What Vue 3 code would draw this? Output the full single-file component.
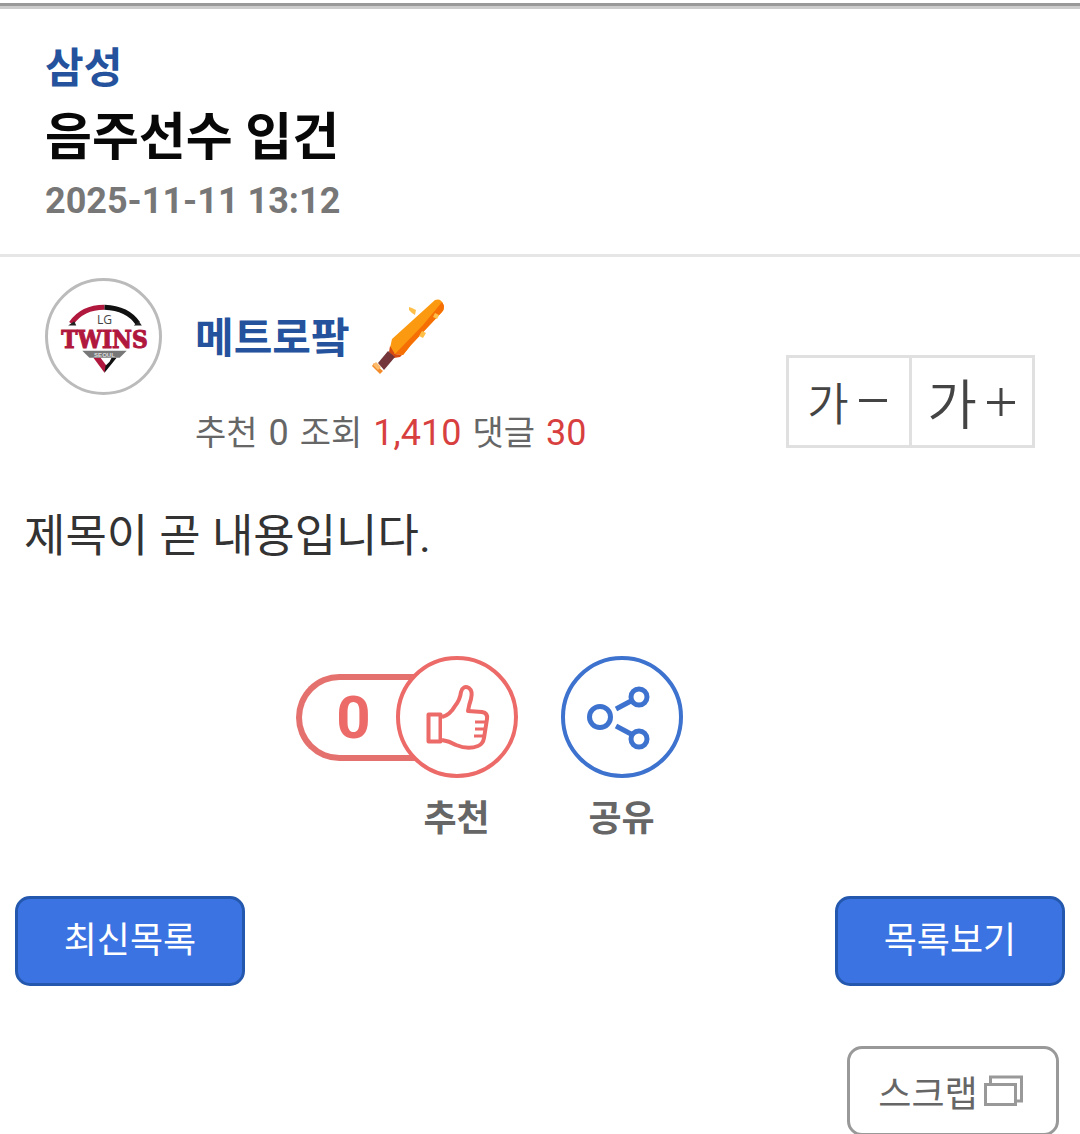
<template>
  <main class="post">
    <header class="post-header">
      <a class="category" href="#">{{ post.category }}</a>
      <h1 class="title">{{ post.title }}</h1>
      <time class="date" datetime="2025-11-11T13:12">{{ post.date }}</time>
    </header>

    <section class="profile">
      <div class="avatar">
        <svg viewBox="0 0 110 110" role="img" aria-label="LG TWINS SEOUL">
          <path d="M23 42 Q34 26 56 26" fill="none" stroke="#b0183d" stroke-width="5" />
          <path d="M56 26 Q79 27 89 42" fill="none" stroke="#111" stroke-width="5" />
          <path d="M20 44l6-4 2 4zM85 44l5-4 3 4z" fill="#222" />
          <text class="logo-lg" x="56" y="43" text-anchor="middle">LG</text>
          <text class="logo-name" x="56" y="66" text-anchor="middle">TWINS</text>
          <path d="M45 76h7l6 8-2 7z" fill="#b0183d" />
          <path d="M56 91l1-7 4-4 2-4h5z" fill="#111" />
          <path d="M34 69h44l-7 7H41z" fill="#777" />
          <text class="logo-city" x="56" y="75" text-anchor="middle">SEOUL</text>
        </svg>
      </div>

      <div class="info">
        <div class="nick-row">
          <a class="nick" href="#">{{ post.author }}</a>
          <svg class="bat" viewBox="0 0 80 80" aria-hidden="true">
            <path d="M64 3q6-2 8 4 2 5-1 8L40 48l-8 10-8-1-5-6 2-9z" fill="#fb9a10" />
            <path d="M71 5q4 5 0 10L40 48l-8 10-8-1 28-29z" fill="#f56f05" />
            <path d="M19 49l5 8 7 1-2 2-6 1-5-6z" fill="#d94a10" />
            <path d="M17 54l7 6-11 13-6-7z" fill="#74363a" />
            <path d="M3 66l9 8-3 3-8-8z" fill="#f48b2a" />
            <path d="M5 65l5 5-3 3-5-5z" fill="#fdbb6c" />
            <path d="M38 10l3 1 4 2-1 5-3-2-3-3zM51 34l4 2-3 5-4-2zM64 16l4 2-2 4-4-2z" fill="#ffc04a" />
          </svg>
        </div>
        <dl class="stats">
          <div>
            <dt>추천</dt>
            <dd>{{ votes }}</dd>
          </div>
          <div>
            <dt>조회</dt>
            <dd class="point">{{ post.views }}</dd>
          </div>
          <div>
            <dt>댓글</dt>
            <dd class="point">{{ post.comments }}</dd>
          </div>
        </dl>
      </div>

      <div class="font-size">
        <button type="button" aria-label="글자 작게" @click="changeSize(-3)">
          <span class="small">가</span>
          <svg viewBox="0 0 28 28" aria-hidden="true"><path d="M0 12.5h28" /></svg>
        </button>
        <button type="button" aria-label="글자 크게" @click="changeSize(3)">
          <span class="large">가</span>
          <svg viewBox="0 0 28 28" aria-hidden="true"><path d="M0 14.5h28M14 0v28" /></svg>
        </button>
      </div>
    </section>

    <article class="content" :style="{ fontSize: textSize + 'px' }">
      {{ post.body }}
    </article>

    <div class="actions">
      <button class="vote" type="button" @click="votes++">
        <span class="count">{{ votes }}</span>
        <svg class="circle" viewBox="0 0 122 122" aria-hidden="true">
          <circle cx="61" cy="61" r="59" />
          <path d="M32.500 58.500h12v27h-12z" />
          <path d="M46 61q8-2 13-11 5-6 6-14 2-7 8-4 4 3 2 11-2 6-3 12l14 1q6 1 5 7l-3 19q-1 6-6 8-10 4-22-1-7-4-14-5" />
          <path class="finger" d="M79 66h10M79 73h9M78 80h9" />
        </svg>
        <span class="label">추천</span>
      </button>

      <button class="share" type="button">
        <svg class="circle" viewBox="0 0 122 122" aria-hidden="true">
          <circle cx="61" cy="61" r="59" />
          <g class="nodes">
            <circle cx="39" cy="61" r="10.500" />
            <circle cx="78" cy="41" r="8" />
            <circle cx="78" cy="83" r="8" />
            <path d="M55 53l15-8M55 70l15 8" />
          </g>
        </svg>
        <span class="label">공유</span>
      </button>
    </div>

    <nav class="lists">
      <a class="list-button" href="#">최신목록</a>
      <a class="list-button" href="#">목록보기</a>
    </nav>

    <div class="tools">
      <button class="scrap" type="button">
        스크랩
        <svg viewBox="0 0 40 32" aria-hidden="true">
          <path d="M6.500 8V2h31v24h-5" />
          <path d="M1.500 9.500h30v20h-30z" />
        </svg>
      </button>
    </div>
  </main>
</template>

<script setup>
import { ref } from 'vue'

const post = {
  category: '삼성',
  title: '음주선수 입건',
  date: '2025-11-11 13:12',
  author: '메트로팤',
  views: '1,410',
  comments: 30,
  body: '제목이 곧 내용입니다.'
}

const votes = ref(0)
const textSize = ref(45)

function changeSize(step) {
  textSize.value = Math.min(60, Math.max(30, textSize.value + step))
}
</script>

<style>
body {
  margin: 0;
  background: #fff;
}
</style>

<style scoped>
.post {
  box-sizing: border-box;
  height: 100vh;
  overflow: hidden;
  padding-top: 3px;
  font-family: Roboto, "Noto Sans CJK KR", sans-serif;
  color: #333;
}

.post * {
  box-sizing: border-box;
}

a {
  text-decoration: none;
}

button {
  margin: 0;
  padding: 0;
  border: none;
  background: none;
  font-family: inherit;
  color: inherit;
  cursor: pointer;
}

svg {
  display: block;
  flex: none;
}

.post-header {
  display: flex;
  flex-direction: column;
  align-items: flex-start;
  padding: 30px 45px 26px;
  border-top: 3px solid #999;
  border-bottom: 3px solid #e6e6e6;
  box-shadow: inset 0 3px #ccc;
}

.category {
  font-size: 42px;
  font-weight: 700;
  line-height: 66px;
  color: #24529d;
}

.title {
  margin: 0;
  font-size: 51px;
  font-weight: 700;
  line-height: 72px;
  color: #080808;
}

.date {
  font-size: 36px;
  font-weight: 700;
  line-height: 54px;
  color: #777;
}

.profile {
  display: flex;
  align-items: flex-start;
  padding: 21px 45px 0;
}

.avatar {
  flex: none;
  width: 117px;
  height: 117px;
  margin-right: 33px;
  border: 3px solid #bbb;
  border-radius: 50%;
}

.logo-lg {
  font: 400 12px "Open Sans", sans-serif;
  fill: #444;
}

.logo-name {
  font: 700 24px "DejaVu Serif Condensed", "DejaVu Serif", serif;
  fill: #b0183d;
  stroke: #b0183d;
  stroke-width: 1px;
}

.logo-city {
  font: 700 6px "Liberation Sans", sans-serif;
  fill: #ddd;
}

.nick-row {
  display: flex;
  align-items: center;
  gap: 21px;
  height: 117px;
}

.nick {
  padding-top: 4px;
  font-size: 42px;
  font-weight: 700;
  line-height: 60px;
  color: #24529d;
}

.bat {
  width: 80px;
  height: 80px;
}

.stats {
  display: flex;
  gap: 11px;
  margin: 8px 0 0;
  line-height: 60px;
  color: #666;
}

.stats div {
  display: flex;
  align-items: baseline;
  gap: 11px;
}

.stats dt {
  font-size: 34px;
}

.stats dd {
  margin: 0;
  font-size: 36px;
}

.stats .point {
  color: #d83f3f;
}

.font-size {
  display: flex;
  margin: 77px 0 0 auto;
  border: 3px solid #e0e0e0;
}

.font-size button {
  display: flex;
  align-items: center;
  justify-content: center;
  gap: 10px;
  width: 120px;
  height: 87px;
  padding-right: 4px;
  color: #444;
}

.font-size button + button {
  width: 123px;
  padding-right: 2px;
  border-left: 3px solid #e0e0e0;
}

.font-size span {
  font-family: "Noto Sans CJK KR", sans-serif;
  font-weight: 350;
  line-height: 72px;
}

.font-size .small {
  font-size: 45px;
}

.font-size .large {
  font-size: 54px;
}

.font-size svg {
  width: 28px;
  height: 28px;
  fill: none;
  stroke: #444;
  stroke-width: 3;
}

.content {
  padding: 38px 24px 0;
  line-height: 72px;
}

.actions {
  display: flex;
  justify-content: center;
  gap: 43px;
  padding: 83px 102px 0 0;
}

.vote {
  display: grid;
  grid-template-columns: 100px 122px;
  align-items: center;
}

.count {
  width: 122px;
  height: 87px;
  padding-right: 12px;
  border: 6px solid #e5716e;
  border-right: none;
  border-radius: 44px 0 0 44px;
  font-size: 60px;
  font-weight: 700;
  line-height: 75px;
  color: #ec6b69;
}

.circle {
  position: relative;
  width: 122px;
  height: 122px;
  fill: #fff;
  stroke: #ec6b69;
  stroke-width: 4;
  stroke-linejoin: round;
}

.finger {
  stroke-width: 3;
}

.share .circle {
  stroke: #3d72cf;
}

.share .nodes {
  stroke-width: 5;
}

.label {
  display: block;
  grid-column: 2;
  padding-top: 17px;
  font-size: 36px;
  font-weight: 700;
  line-height: 48px;
  color: #666;
}

.lists {
  display: flex;
  justify-content: space-between;
  padding: 53px 15px 0;
}

.list-button {
  width: 230px;
  height: 90px;
  border: 3px solid #2458ae;
  border-radius: 15px;
  background: #3b74e2;
  font-size: 36px;
  line-height: 84px;
  text-align: center;
  color: #fff;
}

.tools {
  display: flex;
  justify-content: flex-end;
  padding: 60px 21px 0;
}

.scrap {
  display: flex;
  align-items: center;
  justify-content: center;
  gap: 6px;
  flex: none;
  width: 212px;
  height: 90px;
  padding-right: 4px;
  border: 3px solid #999;
  border-radius: 15px;
  font-size: 36px;
  color: #666;
}

.scrap svg {
  width: 40px;
  height: 32px;
  fill: none;
  stroke: #999;
  stroke-width: 3;
}
</style>
